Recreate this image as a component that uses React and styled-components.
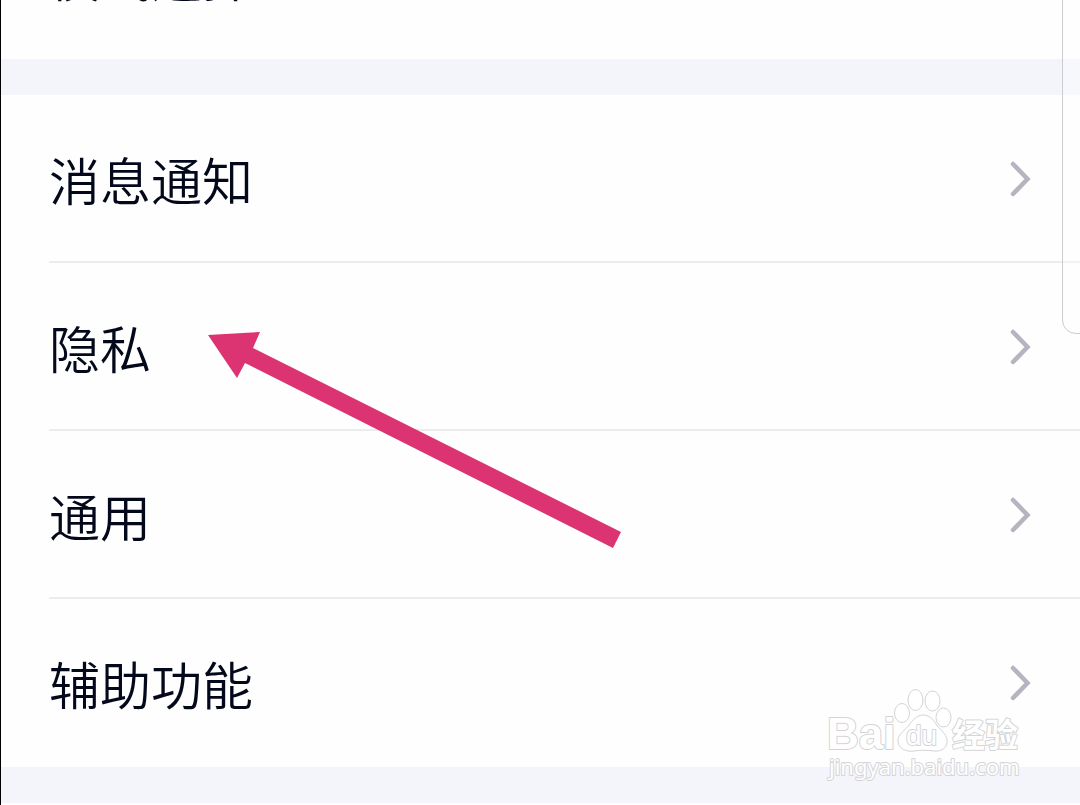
import React from "react";
import styled, { createGlobalStyle } from "styled-components";

const GlobalStyle = createGlobalStyle`
  *{
    box-sizing: border-box;
  }
  body{
    margin: 0;
    background-color: #fefefe;
    font-family: "Noto Sans CJK SC", sans-serif;
    overflow: hidden;
  }
`

const Page = styled.main`
  position: relative;
  border-left: 1px solid black;
  height: 100vh;
  overflow: hidden;
`
const Group = styled.ul`
  list-style: none;
  margin: 0;
  padding: 0 0 2px 48px;
`
const Item = styled.li`
  & + &{
    border-top: 2px solid #ebecee;
  }
`
const Row = styled.button`
  display: flex;
  align-items: center;
  justify-content: space-between;
  width: 100%;
  height: 166px;
  padding: 2px 49px 0 0;
  border: 0;
  background: none;
  color: #03081a;
  font-family: inherit;
  font-size: 51px;
  font-weight: 350;
  line-height: 72px;
  text-align: left;
  cursor: pointer;
`
// the tail of the group that has been scrolled away
const ScrolledAway = styled.div`
  display: flex;
  flex-direction: column;
  justify-content: flex-end;
  height: 59px;
  overflow: hidden;
`
const Gap = styled.div`
  height: 36px;
  background-color: #f4f5fa;
`
const Chevron = styled.svg`
  width: 22px;
  height: 36px;
  fill: none;
  stroke: #b4b5c1;
  stroke-width: 4.5;
  stroke-linecap: round;
`
const EdgePanel = styled.div`
  position: absolute;
  top: -20px;
  right: -20px;
  width: 38px;
  height: 354px;
  border: 1px solid #cbcccd;
  border-radius: 14px;
  background-color: rgba(255, 255, 255, .3);
`
const Arrow = styled.svg`
  position: absolute;
  left: 206px;
  top: 331px;
  width: 415px;
  height: 218px;
  fill: #dc3472;
  pointer-events: none;
`
const Watermark = styled.svg`
  position: absolute;
  right: 50px;
  top: 686px;
  width: 204px;
  height: 100px;
  fill: white;
  stroke: #d4d4d7;
  stroke-width: 1;
  pointer-events: none;
  text{
    paint-order: stroke;
    stroke-width: 2;
    stroke-linejoin: round;
  }
`

const items = ["消息通知", "隐私", "通用", "辅助功能"];

const SettingsRow = ({ label }) => (
  <Item>
    <Row type="button">
      <span>{label}</span>
      <Chevron viewBox="0 0 22 36" aria-hidden="true">
        <path d="M4 3L18.5 18L4 33" />
      </Chevron>
    </Row>
  </Item>
);

const BaiduMark = () => (
  <Watermark viewBox="0 0 204 100">
    <text x="1" y="63" fontFamily="Liberation Sans" fontWeight="bold" fontSize="44">Bai</text>
    <ellipse cx="76" cy="27" rx="7.5" ry="9.5" />
    <ellipse cx="89.5" cy="14" rx="7.5" ry="10.5" />
    <ellipse cx="106.5" cy="15" rx="7.5" ry="10" />
    <ellipse cx="117.5" cy="31.5" rx="7.5" ry="9.5" />
    <path d="M97 29C91 29 87 34 84 38C80 44 71 48 72 56C73 63 80 66 88 65C95 64 101 64 108 65C116 66 122 61 121 54C120 47 114 44 110 38C107 33 103 29 97 29Z" />
    <text x="80" y="59" fontFamily="Liberation Sans" fontSize="28">du</text>
    <text x="126" y="61" fontFamily="Noto Sans CJK SC" fontWeight="bold" fontSize="33">经验</text>
    <text x="3" y="89" fontFamily="Noto Sans" fontSize="22">jingyan.baidu.com</text>
  </Watermark>
);

export default function App() {
  return (
    <>
      <GlobalStyle />
      <Page>
        <ScrolledAway>
          <Group>
            <SettingsRow label="模式选择" />
          </Group>
        </ScrolledAway>
        <Gap />
        <Group>
          {items.map((label) => <SettingsRow key={label} label={label} />)}
        </Group>
        <Gap />
        <EdgePanel />
        <Arrow viewBox="0 0 415 218" aria-hidden="true">
          <path d="M1 4L53 1L46 17L414 201L406 217L38 32L30 47Z" />
        </Arrow>
        <BaiduMark />
      </Page>
    </>
  );
}
